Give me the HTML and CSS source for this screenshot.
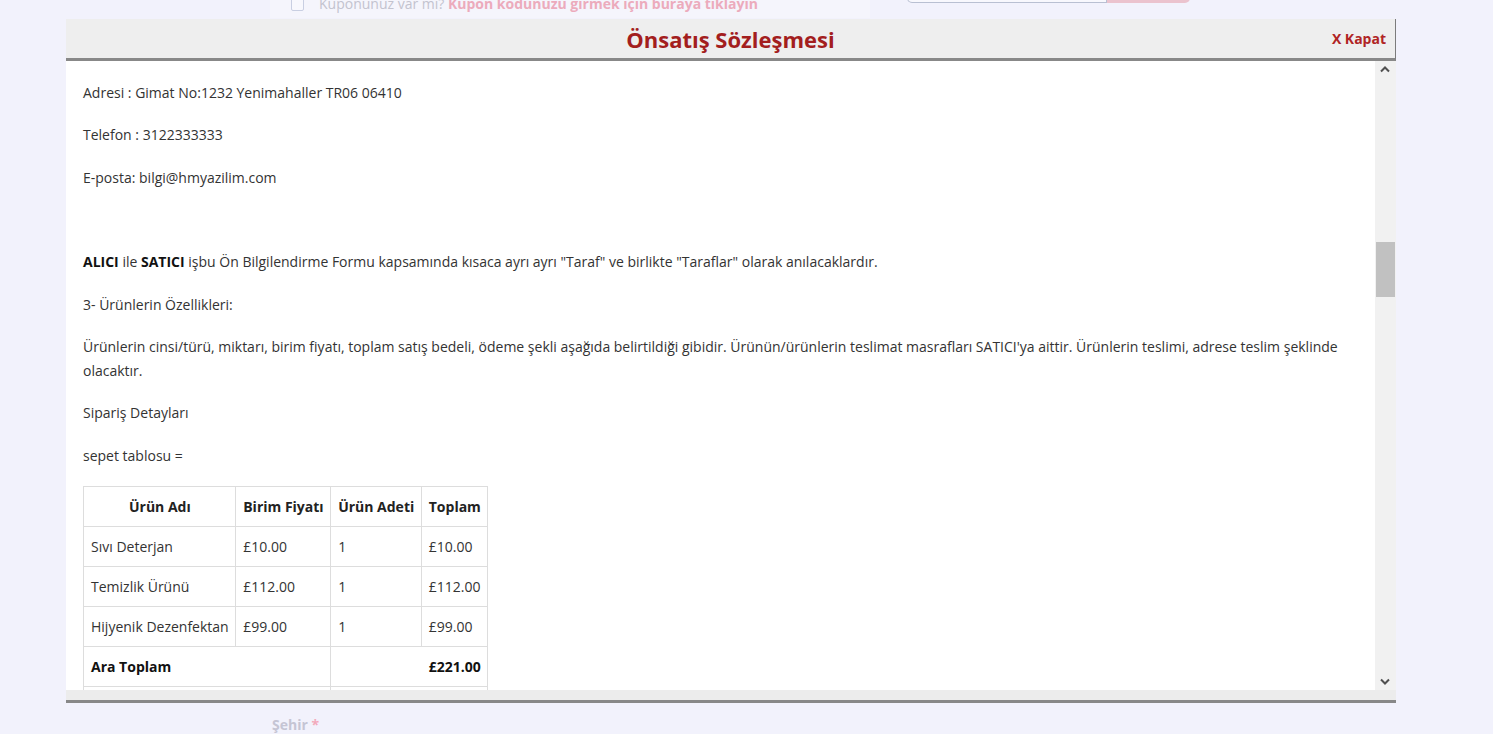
FILE: index.html
```html
<!DOCTYPE html>
<html lang="tr">
<head>
<meta charset="utf-8">
<title>Önsatış Sözleşmesi</title>
<link rel="stylesheet" href="styles.css">
</head>
<body>
<div class="page">
  <div class="top-row">
    <div class="coupon-box">
      <span class="checkbox"></span>
      <span class="coupon-text">Kuponunuz var mı? <a class="coupon-link">Kupon kodunuzu girmek için buraya tıklayın</a></span>
    </div>
    <div class="coupon-form">
      <span class="coupon-input"></span>
      <span class="coupon-btn"></span>
    </div>
  </div>
  <div class="form-area">
    <label class="field-label">Şehir <span class="req">*</span></label>
  </div>
</div>

<div class="modal">
  <div class="modal-header">
    <h2 class="modal-title">Önsatış Sözleşmesi</h2>
    <a class="modal-close">X Kapat</a>
  </div>
  <div class="modal-body">
    <div class="modal-content">
      <p>Adresi : Gimat No:1232 Yenimahaller TR06 06410</p>
      <p>Telefon : 3122333333</p>
      <p>E-posta: bilgi@hmyazilim.com</p>
      <p>&nbsp;</p>
      <p><strong>ALICI</strong> ile <strong>SATICI</strong> işbu Ön Bilgilendirme Formu kapsamında kısaca ayrı ayrı "Taraf" ve birlikte "Taraflar" olarak anılacaklardır.</p>
      <p>3- Ürünlerin Özellikleri:</p>
      <p>Ürünlerin cinsi/türü, miktarı, birim fiyatı, toplam satış bedeli, ödeme şekli aşağıda belirtildiği gibidir. Ürünün/ürünlerin teslimat masrafları SATICI'ya aittir. Ürünlerin teslimi, adrese teslim şeklinde olacaktır.</p>
      <p>Sipariş Detayları</p>
      <p>sepet tablosu =</p>
      <table class="cart">
        <thead>
          <tr><th>Ürün Adı</th><th>Birim Fiyatı</th><th>Ürün Adeti</th><th>Toplam</th></tr>
        </thead>
        <tbody>
          <tr><td>Sıvı Deterjan</td><td>£10.00</td><td>1</td><td>£10.00</td></tr>
          <tr><td>Temizlik Ürünü</td><td>£112.00</td><td>1</td><td>£112.00</td></tr>
          <tr><td>Hijyenik Dezenfektan</td><td>£99.00</td><td>1</td><td>£99.00</td></tr>
          <tr class="sum"><td colspan="2">Ara Toplam</td><td colspan="2" class="right">£221.00</td></tr>
          <tr class="sum"><td colspan="2">&nbsp;</td><td colspan="2" class="right">&nbsp;</td></tr>
        </tbody>
      </table>
    </div>
    <div class="scrollbar">
      <svg class="arrow" width="20" height="17" viewBox="0 0 20 17"><path d="M6 10.5 L10 6.5 L14 10.5" fill="none" stroke="#505050" stroke-width="2"/></svg>
      <div class="track"><div class="thumb"></div></div>
      <svg class="arrow" width="20" height="17" viewBox="0 0 20 17"><path d="M6 6.5 L10 10.5 L14 6.5" fill="none" stroke="#505050" stroke-width="2"/></svg>
    </div>
  </div>
  <div class="modal-footer"></div>
</div>
</body>
</html>
```

FILE: styles.css
```css
html, body {
  margin: 0;
  padding: 0;
}
body {
  background: #f2f2fc;
  font-family: "Open Sans", "Liberation Sans", sans-serif;
  font-size: 14px;
  color: #333;
  height: 734px;
  overflow: hidden;
}

/* background page */
.page {
  display: flex;
  flex-direction: column;
}
.top-row {
  display: flex;
  align-items: flex-start;
  margin-top: -11px;
}
.coupon-box {
  margin-left: 270px;
  width: 600px;
  height: 29px;
  background: #f5f5fc;
  display: flex;
  align-items: center;
  gap: 15px;
  padding-left: 21px;
  box-sizing: border-box;
}
.checkbox {
  width: 11px;
  height: 11px;
  border: 1px solid #c9cfe2;
  border-radius: 2px;
  background: #f8f8fd;
  margin-top: 2px;
}
.coupon-text {
  color: #c3c3cf;
  font-size: 14px;
  line-height: 20px;
}
.coupon-link {
  color: #ecabbc;
  font-weight: 700;
}
.coupon-form {
  display: flex;
  margin-left: 37px;
}
.coupon-input {
  width: 200px;
  height: 14px;
  border: 1px solid #b9c0d2;
  border-top: none;
  border-radius: 0 0 0 5px;
  background: #f8f8fd;
  box-sizing: border-box;
}
.coupon-btn {
  width: 83px;
  height: 14px;
  background: #ebc3ce;
  border-radius: 0 0 5px 0;
}
.form-area {
  padding-top: 697px;
  padding-left: 272px;
}
.field-label {
  font-weight: 700;
  color: #c5c5d4;
  font-size: 14px;
  line-height: 20px;
}
.req {
  color: #f3aabb;
}

/* modal dialog over the page */
.modal {
  position: absolute;
  left: 66px;
  top: 19px;
  width: 1330px;
  display: flex;
  flex-direction: column;
  background: #fff;
}
.modal-header {
  height: 39px;
  background: #eeeeee;
  border-bottom: 3px solid #888;
  border-right: 1px solid #7c7c7c;
  display: flex;
  align-items: center;
  justify-content: center;
  position: relative;
}
.modal-title {
  margin: 0;
  font-size: 22px;
  font-weight: 700;
  color: #a31e1e;
  line-height: 28px;
}
.modal-close {
  position: absolute;
  right: 9px;
  top: 10px;
  font-size: 14px;
  font-weight: 700;
  color: #b02424;
  line-height: 20px;
}
.modal-body {
  display: flex;
  height: 629px;
}
.modal-content {
  flex: 1;
  overflow: hidden;
  padding: 20px 17px 0 17px;
}
.modal-content p {
  margin: 0 0 18.35px;
  line-height: 24px;
}
.modal-content strong {
  color: #111;
}
.scrollbar {
  width: 21px;
  background: #f1f1f1;
  display: flex;
  flex-direction: column;
}
.arrow {
  display: block;
  flex: none;
}
.track {
  flex: 1;
  padding: 0 1px 0 1px;
}
.thumb {
  margin-top: 164px;
  height: 55px;
  background: #c1c1c1;
}
.modal-footer {
  height: 10px;
  background: #ececec;
  border-bottom: 3px solid #888;
}

/* cart table */
.cart {
  border-collapse: collapse;
  color: #333;
}
.cart th, .cart td {
  border: 1px solid #ddd;
  padding: 8px 6.5px 8px 7px;
  line-height: 23px;
  white-space: nowrap;
  text-align: left;
}
.cart th {
  text-align: center;
  font-weight: 700;
  color: #222;
}
.cart .sum td {
  font-weight: 700;
  color: #111;
}
.cart .right {
  text-align: right;
}
```
